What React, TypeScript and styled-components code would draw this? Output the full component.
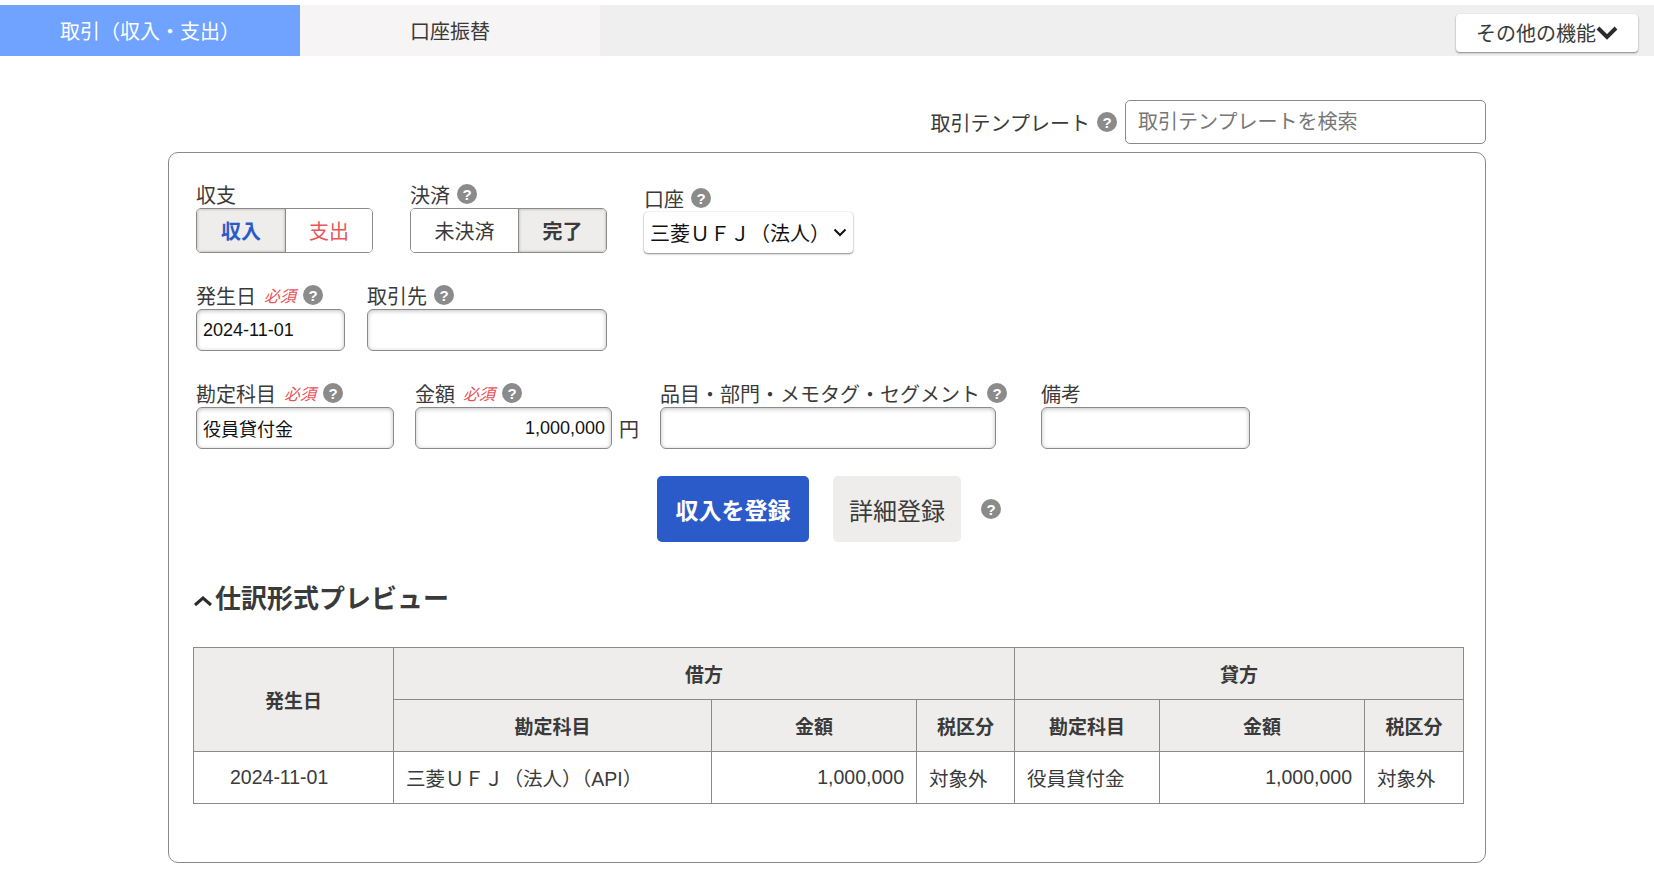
import React from 'react';
import styled, { createGlobalStyle } from 'styled-components';

const GlobalStyle = createGlobalStyle`
  html, body {
    margin: 0;
    padding: 0;
    background: #fff;
  }
  body {
    font-family: "Liberation Sans", "Noto Sans CJK JP", sans-serif;
    font-size: 20px;
    color: #3a3a3a;
  }
  * {
    box-sizing: border-box;
  }
`;

const Page = styled.div`
  width: 1654px;
  height: 889px;
  overflow: hidden;
  padding-top: 5px;
`;

const TabBar = styled.div`
  display: flex;
  align-items: center;
  height: 51px;
  background: #efefef;
  padding-right: 16px;
`;

const Tab = styled.div<{ $active?: boolean }>`
  width: 300px;
  height: 100%;
  display: flex;
  align-items: center;
  justify-content: center;
  background: ${(p) => (p.$active ? '#70a3ff' : '#f6f4f4')};
  color: ${(p) => (p.$active ? '#fff' : '#3a3a3a')};
`;

const MoreButton = styled.button`
  margin-left: auto;
  margin-top: 4px;
  width: 182px;
  height: 38px;
  display: flex;
  align-items: center;
  justify-content: center;
  background: #fff;
  border: none;
  border-radius: 4px;
  box-shadow: 0 1px 2px rgba(0, 0, 0, 0.45);
  font: inherit;
  color: #3a3a3a;
  padding: 0;
`;

const Content = styled.div`
  width: 1318px;
  margin-left: 168px;
`;

const TemplateRow = styled.div`
  display: flex;
  align-items: center;
  justify-content: flex-end;
  margin-top: 44px;
  height: 44px;
`;

const TemplateLabel = styled.span`
  margin-right: 7px;
`;

const TemplateInput = styled.input`
  width: 361px;
  height: 44px;
  margin-left: 8px;
  padding: 0 12px;
  border: 1px solid #8a8a8a;
  border-radius: 5px;
  font: inherit;
  &::placeholder {
    color: #777;
    opacity: 1;
  }
`;

const Card = styled.div`
  margin-top: 8px;
  height: 711px;
  border: 1px solid #8a8a8a;
  border-radius: 10px;
  padding: 28px 24px 0 27px;
`;

const Row = styled.div<{ $top?: number }>`
  display: flex;
  align-items: flex-end;
  margin-top: ${(p) => p.$top ?? 0}px;
`;

const Field = styled.div<{ $gap?: number; $left?: number }>`
  display: flex;
  flex-direction: column;
  margin-left: ${(p) => p.$left ?? 0}px;
`;

const Label = styled.div`
  display: flex;
  align-items: center;
  height: 26px;
  margin-bottom: 1px;
  white-space: nowrap;
`;

const Required = styled.span`
  margin-left: 8px;
  font-size: 16px;
  color: #e8545a;
  font-style: italic;
`;

const Help = styled.span<{ $left?: number }>`
  display: inline-flex;
  align-items: center;
  justify-content: center;
  width: 20px;
  height: 20px;
  flex: none;
  margin-left: ${(p) => p.$left ?? 7}px;
  border-radius: 50%;
  background: #8c8b8b;
  color: #fff;
  font-size: 15px;
  font-weight: 700;
`;

const Segmented = styled.div`
  display: flex;
  height: 45px;
  border: 1px solid #8a8a8a;
  border-radius: 5px;
  overflow: hidden;
`;

const Segment = styled.div<{ $on?: boolean; $width: number; $color?: string }>`
  width: ${(p) => p.$width}px;
  display: flex;
  align-items: center;
  justify-content: center;
  font-weight: ${(p) => (p.$on ? 700 : 400)};
  color: ${(p) => p.$color ?? '#3a3a3a'};
  background: ${(p) => (p.$on ? '#eeedec' : '#fff')};
  box-shadow: ${(p) => (p.$on ? 'inset 0 0 3px rgba(0, 0, 0, 0.3)' : 'none')};
  & + & {
    border-left: 1px solid #8a8a8a;
  }
`;

const SelectBox = styled.div`
  display: flex;
  align-items: center;
  justify-content: space-between;
  width: 209px;
  height: 41px;
  padding: 0 6px;
  background: #fff;
  border-radius: 4px;
  box-shadow: 0 1px 2px rgba(0, 0, 0, 0.45), 0 0 1px rgba(0, 0, 0, 0.25);
  color: #111;
`;

const TextBox = styled.div<{ $width: number; $height?: number; $right?: boolean }>`
  display: flex;
  align-items: center;
  justify-content: ${(p) => (p.$right ? 'flex-end' : 'flex-start')};
  width: ${(p) => p.$width}px;
  height: ${(p) => p.$height ?? 42}px;
  padding: 0 6px;
  background: #fff;
  border: 1px solid #8a8a8a;
  border-radius: 6px;
  box-shadow: inset 0 1px 4px rgba(0, 0, 0, 0.25);
  font-size: 18px;
  color: #111;
`;

const Yen = styled.span`
  width: 48px;
  height: 42px;
  display: flex;
  align-items: center;
  padding-left: 7px;
`;

const Actions = styled.div`
  display: flex;
  align-items: center;
  margin-top: 27px;
  margin-left: 461px;
`;

const SubmitButton = styled.button`
  width: 152px;
  height: 66px;
  border: none;
  border-radius: 5px;
  background: #2a5bc9;
  color: #fff;
  font: inherit;
  font-size: 23px;
  font-weight: 700;
  padding: 0;
`;

const DetailButton = styled.button`
  width: 128px;
  height: 66px;
  margin-left: 24px;
  border: none;
  border-radius: 5px;
  background: #eeedec;
  color: #3a3a3a;
  font: inherit;
  font-size: 24px;
  padding: 0;
`;

const Heading = styled.h2`
  display: flex;
  align-items: center;
  margin: 34px 0 0 -3px;
  height: 40px;
  font-size: 26px;
  font-weight: 700;
  color: #3a3a3a;
`;

const Caret = styled.svg`
  width: 20px;
  height: 12px;
  margin-top: 10px;
  margin-right: 2px;
  flex: none;
`;

const Table = styled.table`
  margin: 31px 0 0 -3px;
  width: 1270px;
  border-collapse: collapse;
  table-layout: fixed;
  font-size: 19.5px;
`;

const Th = styled.th`
  height: 52px;
  padding: 0;
  border: 1px solid #8a8a8a;
  background: #eeedec;
  font-weight: 700;
  font-size: 19px;
  color: #3a3a3a;
`;

const Td = styled.td<{ $align?: string }>`
  height: 52px;
  padding: 0 12px;
  border: 1px solid #8a8a8a;
  text-align: ${(p) => p.$align ?? 'left'};
`;

const DateCell = styled(Td)`
  padding-left: 36px;
`;

const App: React.FC = () => (
  <Page>
    <GlobalStyle />
    <TabBar>
      <Tab $active>取引（収入・支出）</Tab>
      <Tab>口座振替</Tab>
      <MoreButton>
        その他の機能
        <svg width="22" height="15" viewBox="0 0 22 15">
          <path d="M2 3l9 9 9-9" fill="none" stroke="#2b2b2b" strokeWidth="4" />
        </svg>
      </MoreButton>
    </TabBar>
    <Content>
      <TemplateRow>
        <TemplateLabel>取引テンプレート</TemplateLabel>
        <Help $left={0}>?</Help>
        <TemplateInput placeholder="取引テンプレートを検索" />
      </TemplateRow>
      <Card>
        <Row>
          <Field>
            <Label>収支</Label>
            <Segmented>
              <Segment $on $width={88} $color="#2a5bc9">収入</Segment>
              <Segment $width={87} $color="#e8545a">支出</Segment>
            </Segmented>
          </Field>
          <Field $left={37}>
            <Label>決済<Help>?</Help></Label>
            <Segmented>
              <Segment $width={107}>未決済</Segment>
              <Segment $on $width={88}>完了</Segment>
            </Segmented>
          </Field>
          <Field $left={37}>
            <Label>口座<Help>?</Help></Label>
            <SelectBox>
              三菱ＵＦＪ（法人）
              <svg width="14" height="9" viewBox="0 0 14 9">
                <path d="M1.5 1.5L7 7l5.5-5.5" fill="none" stroke="#111" strokeWidth="2" />
              </svg>
            </SelectBox>
          </Field>
        </Row>
        <Row $top={29}>
          <Field>
            <Label>発生日<Required>必須</Required><Help>?</Help></Label>
            <TextBox $width={149}>2024-11-01</TextBox>
          </Field>
          <Field $left={22}>
            <Label>取引先<Help>?</Help></Label>
            <TextBox $width={240}></TextBox>
          </Field>
        </Row>
        <Row $top={29}>
          <Field>
            <Label>勘定科目<Required>必須</Required><Help>?</Help></Label>
            <TextBox $width={198}>役員貸付金</TextBox>
          </Field>
          <Field $left={21}>
            <Label>金額<Required>必須</Required><Help>?</Help></Label>
            <TextBox $width={197} $right>1,000,000</TextBox>
          </Field>
          <Yen>円</Yen>
          <Field>
            <Label>品目・部門・メモタグ・セグメント<Help>?</Help></Label>
            <TextBox $width={336}></TextBox>
          </Field>
          <Field $left={34}>
            <Label>備考</Label>
            <TextBox $width={209}></TextBox>
          </Field>
        </Row>
        <Actions>
          <SubmitButton>収入を登録</SubmitButton>
          <DetailButton>詳細登録</DetailButton>
          <Help $left={20}>?</Help>
        </Actions>
        <Heading>
          <Caret viewBox="0 0 20 12">
            <path d="M2 10l8-7 8 7" fill="none" stroke="#2b2b2b" strokeWidth="3" />
          </Caret>
          仕訳形式プレビュー
        </Heading>
        <Table>
          <colgroup>
            <col width="200" />
            <col width="318" />
            <col width="205" />
            <col width="98" />
            <col width="145" />
            <col width="205" />
            <col width="99" />
          </colgroup>
          <thead>
            <tr>
              <Th rowSpan={2}>発生日</Th>
              <Th colSpan={3}>借方</Th>
              <Th colSpan={3}>貸方</Th>
            </tr>
            <tr>
              <Th>勘定科目</Th>
              <Th>金額</Th>
              <Th>税区分</Th>
              <Th>勘定科目</Th>
              <Th>金額</Th>
              <Th>税区分</Th>
            </tr>
          </thead>
          <tbody>
            <tr>
              <DateCell>2024-11-01</DateCell>
              <Td>三菱ＵＦＪ（法人）（API）</Td>
              <Td $align="right">1,000,000</Td>
              <Td>対象外</Td>
              <Td>役員貸付金</Td>
              <Td $align="right">1,000,000</Td>
              <Td>対象外</Td>
            </tr>
          </tbody>
        </Table>
      </Card>
    </Content>
  </Page>
);

export default App;
